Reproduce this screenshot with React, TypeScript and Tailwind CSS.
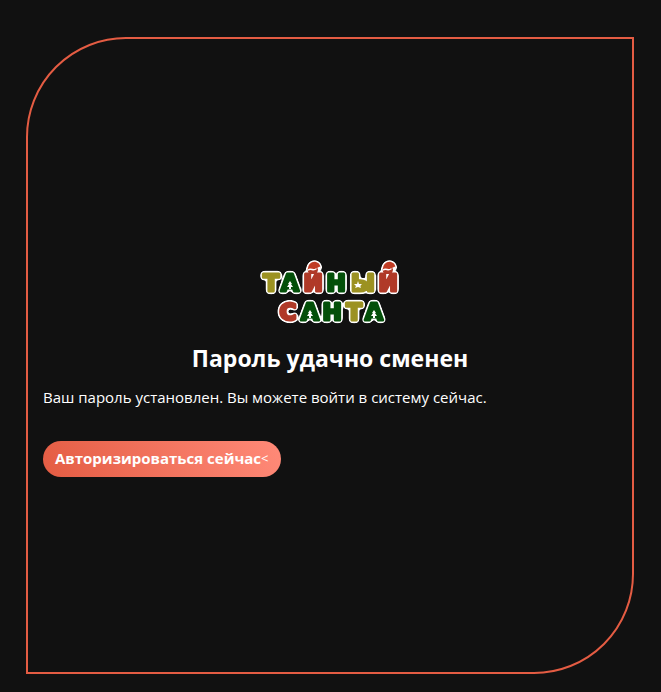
type Glyph = { char: string; x: number; y: number; color: string };

const GREEN = "#04500a";
const RED = "#b03a28";
const OLIVE = "#9c9222";

const glyphs: Glyph[] = [
  { char: "Т", x: 21, y: 32, color: OLIVE },
  { char: "А", x: 40, y: 32, color: GREEN },
  { char: "Й", x: 63, y: 32, color: RED },
  { char: "Н", x: 86, y: 32, color: GREEN },
  { char: "Ы", x: 113, y: 32, color: OLIVE },
  { char: "Й", x: 138, y: 32, color: RED },
  { char: "С", x: 38, y: 61, color: RED },
  { char: "А", x: 60, y: 61, color: GREEN },
  { char: "Н", x: 82, y: 61, color: GREEN },
  { char: "Т", x: 104, y: 61, color: OLIVE },
  { char: "А", x: 124, y: 61, color: GREEN },
];

function Hat({ x }: { x: number }) {
  return (
    <g transform={`translate(${x} 2)`}>
      <path d="M0 8C0 3 4 0 8 1C11 2 13 4 12 8L10 6C9 10 3 9 0 8Z" fill="#c03c24" />
      <path d="M0 9C3 7 5 10 8 8" fill="none" stroke="#fff" strokeWidth="1.5" strokeLinecap="round" />
      <circle cx="11.5" cy="7" r="1.2" fill="#fff" />
    </g>
  );
}

function Tree({ x, y }: { x: number; y: number }) {
  return <path transform={`translate(${x} ${y})`} d="M0 -5L2 -2H1L3 1H1V3H-1V1H-3L-1 -2H-2Z" fill="#fff" />;
}

function Logo() {
  return (
    <svg
      viewBox="0 0 160 68"
      className="mx-auto block h-[68px] w-40"
      role="img"
      aria-label="Тайный Санта"
    >
      <defs>
        <filter id="outline" x="-5%" y="-10%" width="110%" height="120%" colorInterpolationFilters="sRGB">
          <feGaussianBlur in="SourceAlpha" stdDeviation="1.4" result="soft" />
          <feComponentTransfer in="soft" result="round">
            <feFuncA type="linear" slope="9" intercept="-0.7" />
          </feComponentTransfer>
          <feFlood floodColor="#fff" />
          <feComposite in2="round" operator="in" result="edge" />
          <feMerge>
            <feMergeNode in="edge" />
            <feMergeNode in="SourceGraphic" />
          </feMerge>
        </filter>
      </defs>
      <g filter="url(#outline)">
        <g
          textAnchor="middle"
          strokeWidth="3"
          strokeLinejoin="round"
          className="font-['DejaVu_Sans',sans-serif] text-[23px] font-bold"
        >
          {glyphs.map((g, i) => (
            <text key={i} x={g.x} y={g.y} fill={g.color} stroke={g.color}>
              {g.char}
            </text>
          ))}
        </g>
        <Hat x={58} />
        <Hat x={133} />
      </g>
      <Tree x={40} y={27} />
      <Tree x={60} y={56} />
      <Tree x={124} y={56} />
      <path d="M108 22L109 25H112L110 27L111 29L108 28L105 29L106 27L104 25H107Z" fill="#fff" />
    </svg>
  );
}

export default function App() {
  return (
    <div className="flex min-h-screen flex-col bg-[#111111] pt-[37px] pr-[27px] pb-[18px] pl-[26px] font-['Open_Sans','Noto_Sans',sans-serif] text-white">
      <main className="flex flex-1 flex-col justify-center rounded-tl-[100px] rounded-br-[100px] border-2 border-[#e45c43] px-[15px] pt-6">
        <Logo />
        <h1 className="mt-[13px] text-center text-[23px] leading-9 font-bold">Пароль удачно сменен</h1>
        <p className="mt-[9px] text-[15px] leading-6">Ваш пароль установлен. Вы можете войти в систему сейчас.</p>
        <div className="mt-8 flex">
          <a
            href="#login"
            className="flex h-9 items-center rounded-full bg-linear-65 from-[#e45c43] to-[#ff8a78] px-3 text-[15px] font-bold"
          >
            Авторизироваться сейчас<span className="text-[13px] font-normal">&lt;</span>
          </a>
        </div>
      </main>
    </div>
  );
}
